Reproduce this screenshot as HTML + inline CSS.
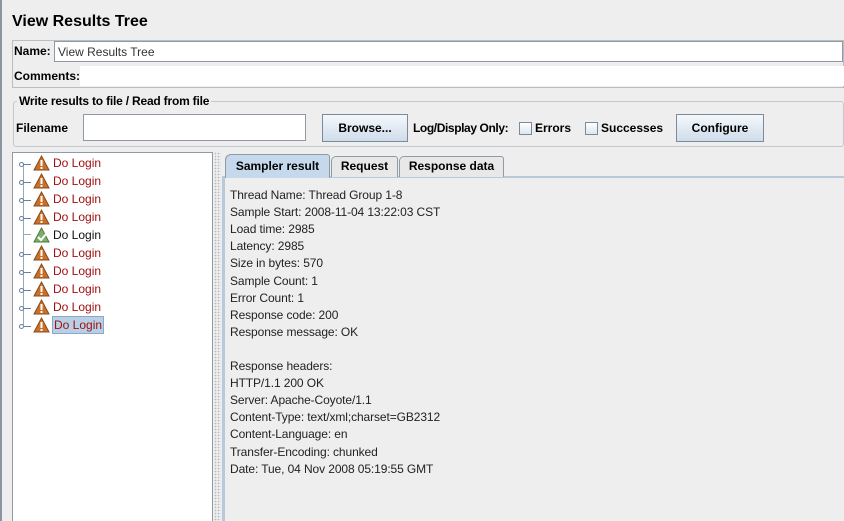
<!DOCTYPE html>
<html><head><style>
*{margin:0;padding:0;box-sizing:border-box}
body{width:844px;height:521px;background:#eeeeee;font-family:"Liberation Sans",sans-serif;font-size:12px;position:relative;overflow:hidden;color:#000}
.a{position:absolute}
.b{font-weight:bold}
.btn{position:absolute;border:1px solid #7a8a99;background:linear-gradient(#f4f8fc,#cfdcea);font-weight:bold;text-align:center;font-size:12px}
.cb{position:absolute;width:13px;height:13px;border:1px solid #7a8a99;background:linear-gradient(#fff,#dde6ef)}
.row{position:absolute;left:18px;height:18px;line-height:18px;font-size:12px;color:#a01010}
.line{position:absolute;left:230px;font-size:12px;color:#222;letter-spacing:-0.1px}
</style></head><body>
<div class="a" style="left:0;top:0;width:2px;height:521px;background:#8a97a3"></div>
<div class="a b" style="left:12px;top:13px;font-size:16px">View Results Tree</div>
<div class="a" style="left:12px;top:40px;width:832px;height:48px;border:1px solid #b8bec4"></div>
<div class="a b" style="left:14px;top:44px">Name:</div>
<div class="a" style="left:54px;top:41px;width:789px;height:21px;background:#fff;border:1px solid #8f9aa5;padding:3px 3px;color:#333">View Results Tree</div>
<div class="a b" style="left:14px;top:69px">Comments:</div>
<div class="a" style="left:80px;top:66px;width:764px;height:20px;background:#fff"></div>
<div class="a" style="left:13px;top:101px;width:831px;height:46px;border:1px solid #c4c9ce;border-radius:3px"></div>
<div class="a b" style="left:17px;top:94px;background:#eeeeee;padding:0 2px;letter-spacing:-0.2px">Write results to file / Read from file</div>
<div class="a b" style="left:16px;top:121px">Filename</div>
<div class="a" style="left:83px;top:114px;width:223px;height:27px;background:#fff;border:1px solid #8f9aa5"></div>
<div class="btn" style="left:322px;top:114px;width:86px;height:28px;line-height:26px">Browse...</div>
<div class="a b" style="left:413px;top:121px;letter-spacing:-0.4px">Log/Display Only:</div>
<div class="cb" style="left:519px;top:122px"></div>
<div class="a b" style="left:535px;top:121px">Errors</div>
<div class="cb" style="left:585px;top:122px"></div>
<div class="a b" style="left:601px;top:121px">Successes</div>
<div class="btn" style="left:676px;top:114px;width:88px;height:28px;line-height:26px">Configure</div>
<div class="a" style="left:12px;top:152px;width:201px;height:369px;background:#fff;border:1px solid #8f9aa5;border-bottom:none"></div>
<div class="a" style="left:214px;top:152px;width:7px;height:369px;background-image:radial-gradient(#b5bcc4 35%,transparent 40%);background-size:3px 3px"></div>
<div class="a" style="left:23px;top:163px;width:1px;height:162px;background:#9aa7b8"></div>
<div id="tree"></div>
<div class="a" style="left:222px;top:176px;width:622px;height:345px;background:#eeeeee;border-top:2px solid #b9c9da;border-left:3px solid #b9c9da"></div>
<div class="a b" style="left:225px;top:154px;width:105px;height:24px;background:#c6d9ec;border:1px solid #8f9aa5;border-bottom:none;border-radius:6px 3px 0 0;text-align:center;line-height:22px">Sampler result</div>
<div class="a b" style="left:331px;top:156px;width:67px;height:21px;background:#e8e8e8;border:1px solid #8f9aa5;border-bottom:none;border-radius:5px 3px 0 0;text-align:center;line-height:19px">Request</div>
<div class="a b" style="left:399px;top:156px;width:105px;height:21px;background:#e8e8e8;border:1px solid #8f9aa5;border-bottom:none;border-radius:5px 3px 0 0;text-align:center;line-height:19px">Response data</div>
<div id="txt"></div>
<script>
var t='';
for(var i=0;i<10;i++){var y=154+i*18;var ok=i==4;
t+='<div class="a" style="left:'+(ok?23:19)+'px;top:'+(y+8)+'px;width:'+(ok?8:5)+'px;height:'+(ok?1:5)+'px;'+(ok?'background:#9aa7b8':'border:1px solid #6a7fa0;border-radius:50%;background:#fff')+'"></div>';
if(!ok)t+='<div class="a" style="left:24px;top:'+(y+10)+'px;width:7px;height:1px;background:#6a7fa0"></div>';
t+='<svg class="a" style="left:33px;top:'+(y+1)+'px" width="17" height="16"><path d="M8.5 1L16 15H1Z" fill="'+(ok?'#7fae6a':'#c8702a')+'" stroke="'+(ok?'#4a7a3a':'#8a4a1a')+'"/>'+(ok?'<path d="M5 10l3 3 5-6" stroke="#fff" stroke-width="2" fill="none"/>':'<rect x="7.5" y="5" width="2" height="6" fill="#fff"/><rect x="7.5" y="12" width="2" height="2" fill="#fff"/>')+'</svg>';
t+='<div class="row" style="left:'+(i==9?52:53)+'px;top:'+y+'px;'+(ok?'color:#111;':'')+(i==9?'background:#b8cfe5;border:1px solid #8aa8c8;padding:0 1px;line-height:16px;height:18px;':'')+'">Do Login</div>';}
document.getElementById('tree').innerHTML=t;
var L=['Thread Name: Thread Group 1-8','Sample Start: 2008-11-04 13:22:03 CST','Load time: 2985','Latency: 2985','Size in bytes: 570','Sample Count: 1','Error Count: 1','Response code: 200','Response message: OK','','Response headers:','HTTP/1.1 200 OK','Server: Apache-Coyote/1.1','Content-Type: text/xml;charset=GB2312','Content-Language: en','Transfer-Encoding: chunked','Date: Tue, 04 Nov 2008 05:19:55 GMT'];
var s='';for(var j=0;j<L.length;j++)s+='<div class="line" style="top:'+(188+j*17.1)+'px">'+L[j]+'</div>';
document.getElementById('txt').innerHTML=s;
</script>
</body></html>
